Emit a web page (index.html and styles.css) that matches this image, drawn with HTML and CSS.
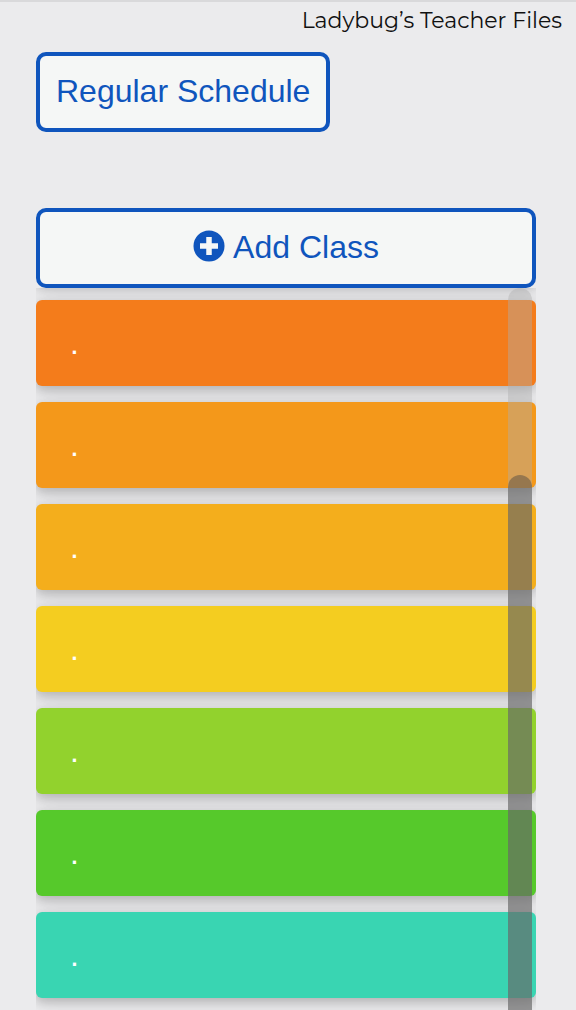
FILE: index.html
```html
<!DOCTYPE html>
<html lang="en">

<head>
    <meta charset="UTF-8">
    <meta name="viewport" content="width=device-width, initial-scale=1.0">
    <title>Schedule</title>
    <link rel="stylesheet" href="styles.css">
</head>

<body>
    <header class="site-title">Ladybug’s Teacher Files</header>

    <main class="schedule">
        <button type="button" class="btn btn-schedule">Regular Schedule</button>

        <button type="button" class="btn btn-add">
            <svg class="icon" viewBox="0 0 32 32" aria-hidden="true">
                <circle cx="16" cy="16" r="15.5" fill="currentColor" />
                <path d="M16 7v18M7 16h18" stroke="#f5f7f6" stroke-width="5.5" />
            </svg>
            Add Class
        </button>

        <div class="class-list">
            <ul class="classes">
                <li><button type="button" class="class-item orange">.</button></li>
                <li><button type="button" class="class-item tangerine">.</button></li>
                <li><button type="button" class="class-item amber">.</button></li>
                <li><button type="button" class="class-item yellow">.</button></li>
                <li><button type="button" class="class-item lime">.</button></li>
                <li><button type="button" class="class-item green">.</button></li>
                <li><button type="button" class="class-item teal">.</button></li>
            </ul>
            <div class="scroll-track">
                <div class="scroll-thumb"></div>
            </div>
        </div>
    </main>
</body>

</html>
```

FILE: styles.css
```css
* {
    box-sizing: border-box;
}

body {
    display: flex;
    flex-direction: column;
    height: 100vh;
    margin: 0;
    overflow: hidden;
    border-top: 2px solid #d9d9db;
    background-color: #ebebed;
    font-family: "Liberation Sans", Arial, sans-serif;
}

.site-title {
    padding: 4px 14px 0 0;
    color: #111;
    font-family: Montserrat, Inter, sans-serif;
    font-size: 22px;
    line-height: 30px;
    text-align: right;
}

.schedule {
    display: flex;
    flex: 1;
    flex-direction: column;
    min-height: 0;
    padding: 16px 40px 0 36px;
}

.btn {
    display: flex;
    flex-shrink: 0;
    align-items: center;
    justify-content: center;
    gap: 8px;
    height: 80px;
    padding: 0 16px 2px;
    border: 4px solid #0f55bd;
    border-radius: 10px;
    background-color: #f5f7f6;
    color: #0f55bd;
    font-family: inherit;
    font-size: 32px;
    cursor: pointer;
}

.btn-schedule {
    align-self: flex-start;
    margin-bottom: 76px;
}

.icon {
    width: 32px;
    height: 32px;
    margin-bottom: 2px;
}

/* scrolling list of classes */
.class-list {
    position: relative;
    flex: 1;
    min-height: 0;
    overflow: hidden;
}

.classes {
    display: flex;
    flex-direction: column;
    gap: 16px;
    margin: -90px 0 0;
    padding: 0;
    list-style: none;
}

/* keeps the row shadow above the first class */
.classes::before {
    content: "";
    height: 86px;
}

.classes::before,
.class-item {
    border-radius: 6px;
    box-shadow: 0 4px 10px rgba(0, 0, 0, 0.16), 0 4px 20px rgba(0, 0, 0, 0.12);
}

.class-item {
    display: block;
    width: 100%;
    height: 86px;
    padding: 0 34px;
    border: none;
    color: #fff;
    font-family: inherit;
    font-size: 32px;
    text-align: left;
    cursor: pointer;
}

.orange {
    background-color: #f47c1b;
}

.tangerine {
    background-color: #f4981a;
}

.amber {
    background-color: #f4ae1c;
}

.yellow {
    background-color: #f4cd20;
}

.lime {
    background-color: #92d22d;
}

.green {
    background-color: #56c92b;
}

.teal {
    background-color: #39d5b2;
}

.scroll-track {
    position: absolute;
    top: 0;
    right: 4px;
    bottom: 0;
    width: 24px;
    padding-top: 187px;
    border-radius: 12px 12px 0 0;
    background-color: rgba(174, 174, 174, 0.42);
}

.scroll-thumb {
    height: 100%;
    border-radius: 12px 12px 0 0;
    background-color: rgba(66, 66, 66, 0.43);
}
```
